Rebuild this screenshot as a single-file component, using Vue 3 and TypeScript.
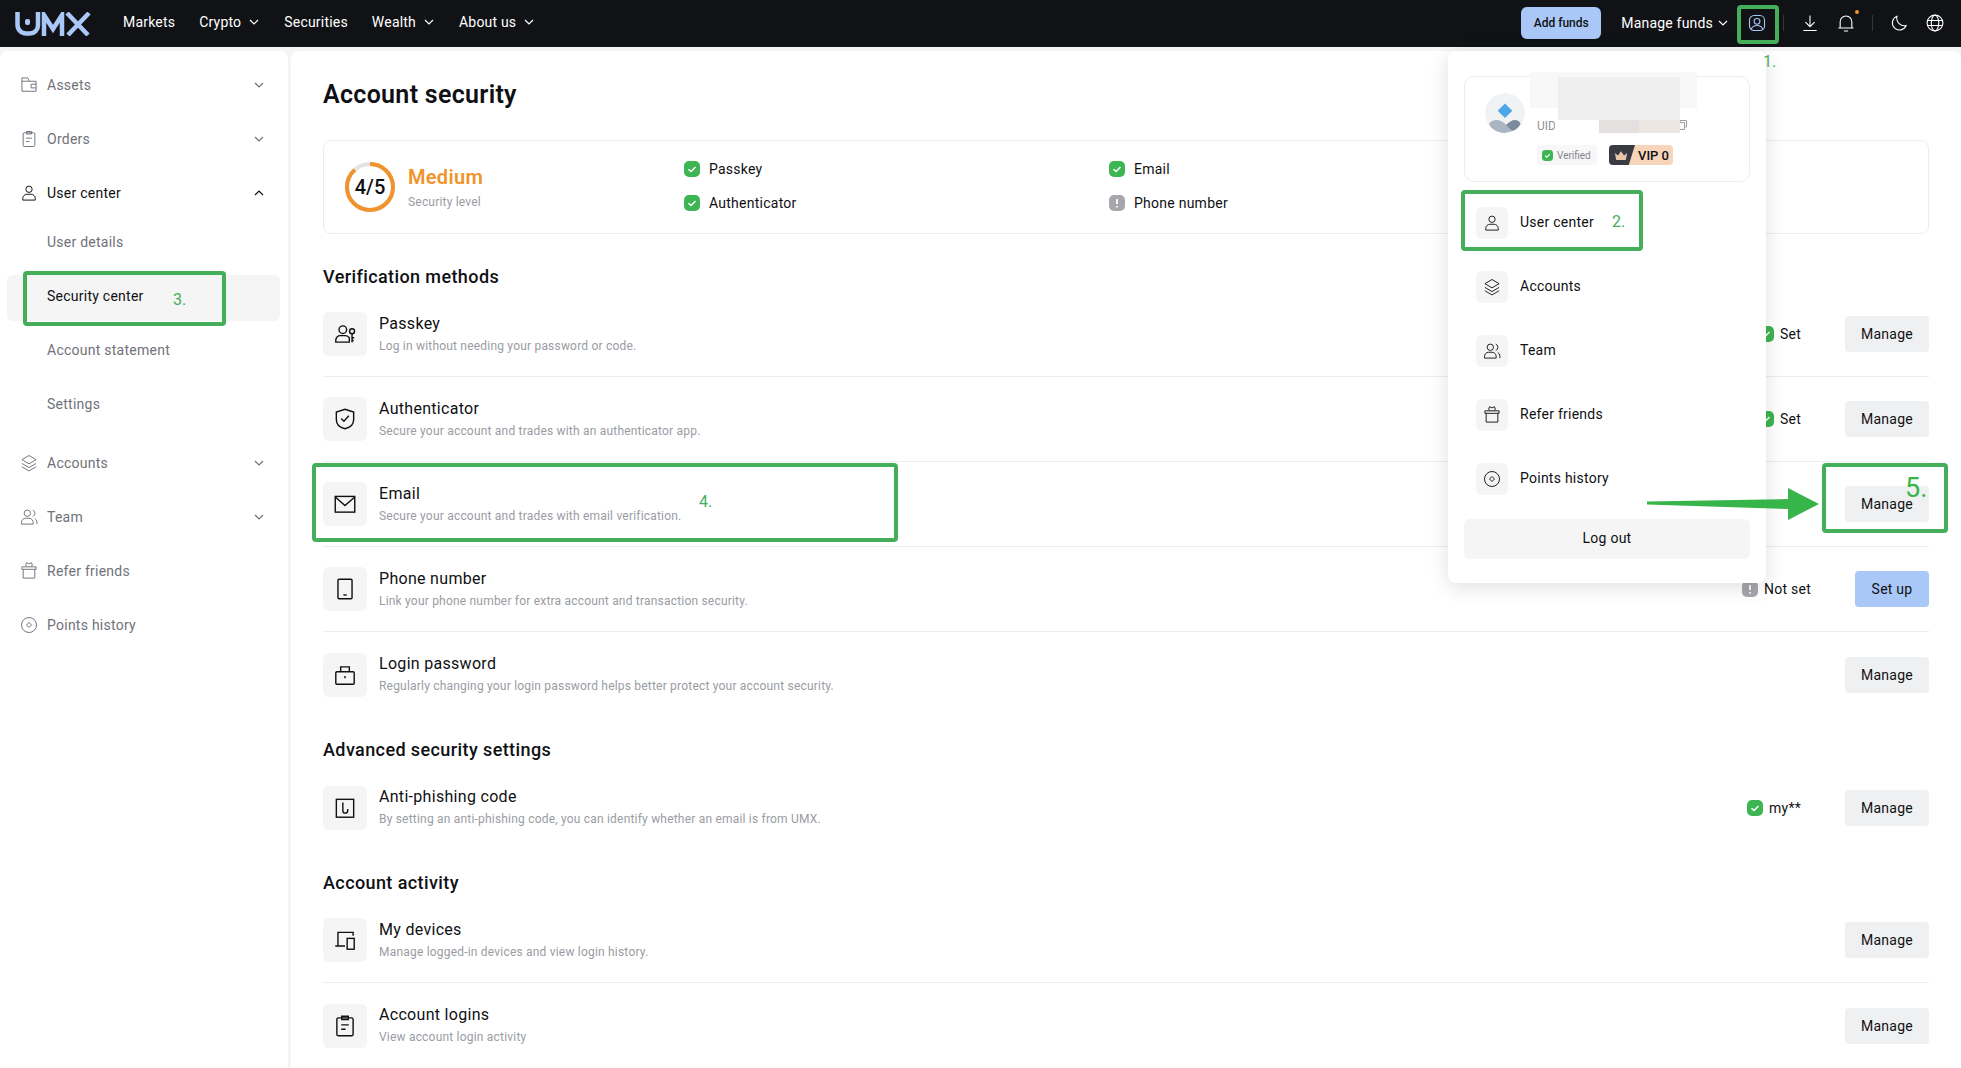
<script setup lang="ts">
interface NavLink {
  label: string;
  arrow?: boolean;
}
interface SideItem {
  label: string;
  icon?: string;
  arrow?: "down" | "up";
  active?: boolean;
  strong?: boolean;
}
interface Row {
  title: string;
  desc: string;
  icon: string;
  status?: string;
  state?: "ok" | "warn";
  action?: string;
}

const icons: Record<string, string> = {
  wallet:
    '<path d="M3.500 5.500v14h17v-12h-17M3.500 5.500v-2h7l2 4"/><path d="M20.500 11h-6v4.500h6"/>',
  orders:
    '<rect x="5" y="4.500" width="14" height="16.500" rx="1.500"/><path d="M9 3h6v3H9zM8.500 11h7M8.500 15h4"/>',
  user: '<circle cx="12" cy="7.500" r="3.800"/><path d="M4.500 20.500v-2a5 5 0 0 1 5-5h5a5 5 0 0 1 5 5v2z"/>',
  layers:
    '<path d="M12 3l8.500 5-8.500 5-8.500-5zM3.500 12.500l8.500 5 8.500-5M3.500 16.500l8.500 5 8.500-5"/>',
  team: '<circle cx="10" cy="7.500" r="3.800"/><path d="M3 20.500v-2a5 5 0 0 1 5-5h4a5 5 0 0 1 5 5v2zM16.500 3.800a4 4 0 0 1 0 7.500M19 13.800a5 5 0 0 1 2.500 4.500v2.200"/>',
  gift: '<path d="M5 10v10.500h14V10M3.500 7h17v3h-17zM12 3.500l-3-1.500-1 3 1.500 2M12 3.500l3-1.500 1 3-1.500 2"/>',
  points:
    '<circle cx="12" cy="12" r="9"/><path d="M12 9l3 3-3 3-3-3z"/>',
  passkey:
    '<circle cx="10" cy="8" r="3.500"/><path d="M3.500 19.500v-2a4 4 0 0 1 4-4h5a4 4 0 0 1 3.500 2v4z"/><circle cx="18.500" cy="9.500" r="2.300"/><path d="M18.500 12v7.500M18.500 15.500h2M18.500 18h1.500"/>',
  shield:
    '<path d="M12 3l8 2.500v7c0 4.500-3.500 7.500-8 8.500-4.500-1-8-4-8-8.500v-7z"/><path d="M8.500 11.500l2.500 2.500 4.500-5"/>',
  mail: '<rect x="3" y="5" width="18" height="14.500"/><path d="M3 5.500l9 8 9-8"/>',
  phone:
    '<rect x="5.500" y="3" width="13" height="18" rx="1"/><path d="M10.500 17.500h3"/>',
  lock: '<rect x="3.500" y="9" width="17" height="11.500" rx="1"/><path d="M8 9V4.500h8V9M12 13v2"/>',
  hook: '<rect x="4" y="4" width="16" height="16.500"/><path d="M10 7v7.500a2.200 2.200 0 0 0 4.500 0v-1.500"/>',
  devices:
    '<path d="M5.500 17V5h14v3M3 17.500h9"/><rect x="14" y="10.500" width="6.500" height="10"/>',
  clipboard:
    '<rect x="4.500" y="4.500" width="15" height="16.500" rx="1.500"/><path d="M9 3h6v3H9zM8.500 11h7M8.500 15h4"/>',
};

const navLinks: NavLink[] = [
  { label: "Markets" },
  { label: "Crypto", arrow: true },
  { label: "Securities" },
  { label: "Wealth", arrow: true },
  { label: "About us", arrow: true },
];

const sideItems: SideItem[] = [
  { label: "Assets", icon: "wallet", arrow: "down" },
  { label: "Orders", icon: "orders", arrow: "down" },
  { label: "User center", icon: "user", arrow: "up", strong: true },
  { label: "User details" },
  { label: "Security center", active: true },
  { label: "Account statement" },
  { label: "Settings" },
  { label: "Accounts", icon: "layers", arrow: "down" },
  { label: "Team", icon: "team", arrow: "down" },
  { label: "Refer friends", icon: "gift" },
  { label: "Points history", icon: "points" },
];

const methods: Row[] = [
  { title: "Passkey", desc: "Log in without needing your password or code.", icon: "passkey", status: "Set", state: "ok" },
  { title: "Authenticator", desc: "Secure your account and trades with an authenticator app.", icon: "shield", status: "Set", state: "ok" },
  { title: "Email", desc: "Secure your account and trades with email verification.", icon: "mail" },
  { title: "Phone number", desc: "Link your phone number for extra account and transaction security.", icon: "phone", status: "Not set", state: "warn", action: "Set up" },
  { title: "Login password", desc: "Regularly changing your login password helps better protect your account security.", icon: "lock" },
];
const advanced: Row[] = [
  { title: "Anti-phishing code", desc: "By setting an anti-phishing code, you can identify whether an email is from UMX.", icon: "hook", status: "my**", state: "ok" },
];
const activity: Row[] = [
  { title: "My devices", desc: "Manage logged-in devices and view login history.", icon: "devices" },
  { title: "Account logins", desc: "View account login activity", icon: "clipboard" },
];
const sections = [
  { title: "Verification methods", rows: methods },
  { title: "Advanced security settings", rows: advanced },
  { title: "Account activity", rows: activity },
];

const summary = [
  { label: "Passkey", state: "ok" },
  { label: "Email", state: "ok" },
  { label: "Authenticator", state: "ok" },
  { label: "Phone number", state: "warn" },
];

const menu = [
  { label: "User center", icon: "user" },
  { label: "Accounts", icon: "layers" },
  { label: "Team", icon: "team" },
  { label: "Refer friends", icon: "gift" },
  { label: "Points history", icon: "points" },
];

// 4 of 5 on the ring, with a small gap at the top left
const ringLength = 2 * Math.PI * 23;
const ringDash = `${ringLength * 0.88} ${ringLength}`;
</script>

<template>
  <div class="page">
    <header class="topbar">
      <svg class="logo" viewBox="0 0 76 24" fill="none" stroke="#a9c7f7" stroke-width="4.500">
        <path d="M2.500 0v13a8.500 8.500 0 0 0 8.500 8.500h4a8 8 0 0 0 8-8V0" />
        <rect x="10" y="7" width="5" height="6" rx="2" fill="#a9c7f7" stroke="none" />
        <path d="M29 24V3l9 14 9-14v21" />
        <path d="M52 1l21 22M74 1L53 23" />
      </svg>
      <nav class="nav">
        <a v-for="link in navLinks" :key="link.label" class="nav-link">
          {{ link.label }}
          <svg v-if="link.arrow" class="chev" viewBox="0 0 12 12"><path d="M2 4l4 4 4-4" /></svg>
        </a>
      </nav>
      <div class="top-right">
        <button class="add-funds">Add funds</button>
        <a class="nav-link manage-funds">
          Manage funds
          <svg class="chev" viewBox="0 0 12 12"><path d="M2 4l4 4 4-4" /></svg>
        </a>
        <svg class="top-icon user-icon" viewBox="0 0 24 24">
          <rect x="3" y="3" width="18" height="18" rx="5.500" />
          <circle cx="12" cy="10" r="3.500" />
          <path d="M5 20c1-3.500 3.500-5 7-5s6 1.500 7 5" />
        </svg>
        <span class="top-sep"></span>
        <svg class="top-icon" viewBox="0 0 24 24">
          <path d="M12 3v13M6.500 11l5.500 5.500 5.500-5.500M4 21h16" />
        </svg>
        <span class="bell-wrap">
          <svg class="top-icon" viewBox="0 0 24 24">
            <path d="M5 18v-7.500a7 7 0 0 1 14 0V18M3 18h18M9.500 21.500h5" />
          </svg>
          <i class="bell-dot"></i>
        </span>
        <span class="top-sep"></span>
        <svg class="top-icon" viewBox="0 0 24 24">
          <path d="M9.500 4a8.500 8.500 0 1 0 11 11c-6 1.500-12.500-4-11-11z" />
        </svg>
        <svg class="top-icon" viewBox="0 0 24 24">
          <circle cx="12" cy="12" r="9.500" />
          <ellipse cx="12" cy="12" rx="4.500" ry="9.500" />
          <path d="M2.500 9h19M2.500 15h19" />
        </svg>
      </div>
    </header>

    <div class="body">
      <aside class="sidebar">
        <a
          v-for="item in sideItems"
          :key="item.label"
          class="side-item"
          :class="{ active: item.active, strong: item.strong, top: item.icon }"
        >
          <svg v-if="item.icon" class="side-icon" viewBox="0 0 24 24" v-html="icons[item.icon]"></svg>
          <span class="side-label">{{ item.label }}</span>
          <svg v-if="item.arrow" class="side-chev" :class="item.arrow" viewBox="0 0 12 12">
            <path d="M2 4l4 4 4-4" />
          </svg>
        </a>
      </aside>

      <main class="main">
        <h1 class="title">Account security</h1>

        <section class="level">
          <div class="score">
            <div class="ring">
              <svg viewBox="0 0 52 52">
                <circle cx="26" cy="26" r="23" class="ring-bg" />
                <circle
                  cx="26"
                  cy="26"
                  r="23"
                  class="ring-fg"
                  :stroke-dasharray="ringDash"
                  transform="rotate(-90 26 26)"
                />
              </svg>
              <span>4/5</span>
            </div>
            <div>
              <div class="medium">Medium</div>
              <div class="level-note">Security level</div>
            </div>
          </div>
          <div class="summary">
            <div v-for="s in summary" :key="s.label" class="summary-item">
              <svg class="mark" viewBox="0 0 16 16">
                <template v-if="s.state === 'ok'">
                  <rect width="16" height="16" rx="5" fill="#3cb552" />
                  <path d="M4.500 8.200l2.500 2.300 4.500-4.500" fill="none" stroke="#fff" stroke-width="1.500" />
                </template>
                <template v-else>
                  <rect width="16" height="16" rx="5" fill="#a5a7ad" />
                  <path d="M8 4v5M8 11v1.500" fill="none" stroke="#fff" stroke-width="1.800" />
                </template>
              </svg>
              {{ s.label }}
            </div>
          </div>
        </section>

        <section v-for="section in sections" :key="section.title" class="group">
          <h2 class="group-title">{{ section.title }}</h2>
          <div v-for="row in section.rows" :key="row.title" class="row">
            <div class="row-icon">
              <svg viewBox="0 0 24 24" v-html="icons[row.icon]"></svg>
            </div>
            <div class="row-text">
              <div class="row-title">{{ row.title }}</div>
              <div class="row-desc">{{ row.desc }}</div>
            </div>
            <div v-if="row.status" class="row-status">
              <svg class="mark" viewBox="0 0 16 16">
                <template v-if="row.state === 'ok'">
                  <rect width="16" height="16" rx="5" fill="#3cb552" />
                  <path d="M4.500 8.200l2.500 2.300 4.500-4.500" fill="none" stroke="#fff" stroke-width="1.500" />
                </template>
                <template v-else>
                  <rect width="16" height="16" rx="5" fill="#a5a7ad" />
                  <path d="M8 4v5M8 11v1.500" fill="none" stroke="#fff" stroke-width="1.800" />
                </template>
              </svg>
              {{ row.status }}
            </div>
            <button class="row-btn" :class="{ primary: row.action }">{{ row.action || "Manage" }}</button>
          </div>
        </section>
      </main>
    </div>

    <!-- account dropdown -->
    <div class="dropdown">
      <div class="profile">
        <svg class="avatar" viewBox="0 0 40 40">
          <clipPath id="avatar-clip"><circle cx="20" cy="20" r="20" /></clipPath>
          <g clip-path="url(#avatar-clip)">
            <circle cx="20" cy="20" r="20" fill="#f0f2f4" />
            <path d="M20 10.500l7.300 7.300-7.300 7.300-7.300-7.300z" fill="#4aa8e8" />
            <path d="M4 31c2-4 8-5 12-3 4 2 7 5 11 10-5 2-11 3-15 1-4-2-7-5-8-8z" fill="#a9b5c3" />
            <path d="M21 32c3-3 6-5 9-5s5 2 5.500 4c-1.500 3-4.500 6-8.500 7-2-2-4-4-6-6z" fill="#7d8c9c" />
          </g>
        </svg>
        <div class="uid">UID</div>
        <svg class="copy" viewBox="0 0 12 12">
          <path d="M4 3V1.500h6.500V8H9M1.500 3.500H8.500V10.500H1.500z" />
        </svg>
        <div class="badges">
          <span class="verified">
            <svg class="mark" viewBox="0 0 16 16">
              <rect width="16" height="16" rx="5" fill="#3cb552" />
              <path d="M4.500 8.200l2.500 2.300 4.500-4.500" fill="none" stroke="#fff" stroke-width="1.500" />
            </svg>
            Verified
          </span>
          <span class="vip">
            <span class="vip-crown">
              <svg viewBox="0 0 16 12"><path d="M1 3l3.500 3L8 1l3.500 5L15 3l-1.500 8h-11z" fill="#e8c4a8" /></svg>
            </span>
            VIP 0
          </span>
        </div>
        <i class="blur blur-a"></i>
        <i class="blur blur-b"></i>
        <i class="blur blur-c"></i>
        <i class="blur blur-d"></i>
      </div>
      <a v-for="m in menu" :key="m.label" class="menu-item">
        <span class="menu-icon">
          <svg viewBox="0 0 24 24" v-html="icons[m.icon]"></svg>
        </span>
        <span class="menu-label">{{ m.label }}</span>
      </a>
      <button class="logout">Log out</button>
    </div>

    <!-- green tutorial marks drawn over the screenshot -->
    <i class="mark-box box-1"></i>
    <i class="mark-box box-2"></i>
    <i class="mark-box box-3"></i>
    <i class="mark-box box-4"></i>
    <i class="mark-box box-5"></i>
    <span class="step step-1">1.</span>
    <span class="step step-2">2.</span>
    <span class="step step-3">3.</span>
    <span class="step step-4">4.</span>
    <span class="step step-5">5.</span>
    <svg class="arrow" viewBox="0 0 172 32">
      <path d="M0 13.500L141 11V0l31 16-31 16V21L0 16.500z" fill="#38b54a" />
    </svg>
  </div>
</template>

<style>
html,
body {
  margin: 0;
  background: #f5f5f5;
}
</style>

<style scoped>
.page {
  position: relative;
  width: 1961px;
  height: 1068px;
  overflow: hidden;
  font-family: Roboto, "Noto Sans", sans-serif;
  color: #0f1013;
  background: #f5f5f5;
}

.topbar {
  height: 47px;
  background: #111215;
  display: flex;
  align-items: center;
  padding: 0 16px 0 15px;
}

.logo {
  width: 76px;
  height: 24px;
  flex: none;
}

.nav {
  display: flex;
  margin-left: 32px;
  gap: 24px;
  padding-bottom: 3px;
}

.nav-link {
  display: flex;
  align-items: center;
  gap: 7px;
  color: #fff;
  font-size: 14px;
  letter-spacing: 0.2px;
  white-space: nowrap;
}

.chev {
  width: 12px;
  height: 12px;
  fill: none;
  stroke: #fff;
  stroke-width: 1.200;
}

.top-right {
  margin-left: auto;
  display: flex;
  align-items: center;
  padding-bottom: 1px;
}

.add-funds {
  width: 80px;
  height: 32px;
  border: 0;
  border-radius: 6px;
  background: #a9c7f7;
  color: #0f1013;
  font: 500 12px Roboto, sans-serif;
  margin-right: 20px;
}

.manage-funds {
  gap: 4px;
  margin-right: 18px;
}

.top-icon {
  width: 20px;
  height: 20px;
  fill: none;
  stroke: #fff;
  stroke-width: 1.300;
  display: block;
}

.user-icon {
  stroke: #a9c7f7;
}

.top-sep {
  width: 1px;
  height: 16px;
  background: #33353a;
  margin: 0 16px;
}

.bell-wrap {
  position: relative;
  margin-left: 16px;
}

.bell-dot {
  position: absolute;
  top: -3px;
  right: -3px;
  width: 4px;
  height: 4px;
  border-radius: 50%;
  background: #f0932b;
}

.top-right > .top-icon:last-child {
  margin-left: 16px;
}

.body {
  display: flex;
  height: 1017px;
  margin-top: 4px;
  gap: 3px;
}

.sidebar {
  width: 288px;
  flex: none;
  background: #fff;
  border-radius: 8px 8px 0 0;
  padding: 7px 8px 0 7px;
  box-sizing: border-box;
}

.side-item {
  display: flex;
  align-items: center;
  height: 54px;
  padding: 0 15px 0 40px;
  color: #70727a;
  font-size: 14px;
  letter-spacing: 0.25px;
  border-radius: 6px;
}

.side-item.top {
  padding-left: 12px;
}

/* the sub list sits closer to its parent and leaves the gap below it */
.side-item:nth-child(4) {
  margin-top: -5px;
}

.side-item:nth-child(7) {
  margin-bottom: 5px;
}

.side-item.active {
  height: 46px;
  box-sizing: border-box;
  margin: 6px 0 2px;
  padding-bottom: 4px;
  background: #f5f5f5;
  color: #0f1013;
}

.side-item.strong {
  color: #0f1013;
}

.side-icon {
  width: 20px;
  height: 20px;
  margin-right: 8px;
  fill: none;
  stroke: #70727a;
  stroke-width: 1.150;
  flex: none;
}

.strong .side-icon {
  stroke: #0f1013;
}

.side-chev {
  margin-left: auto;
  width: 12px;
  height: 12px;
  fill: none;
  stroke: #70727a;
  stroke-width: 1.200;
}

.side-chev.up {
  transform: rotate(180deg);
  stroke: #0f1013;
}

.main {
  flex: 1;
  background: #fff;
  border-radius: 8px 8px 0 0;
  padding: 0 32px;
  overflow: hidden;
}

.title {
  margin: 30px 0 0;
  font-size: 25px;
  line-height: 28px;
  font-weight: 600;
  letter-spacing: 0.3px;
}

.level {
  margin-top: 31px;
  height: 94px;
  box-sizing: border-box;
  border: 1px solid #ebecee;
  border-radius: 8px;
  display: flex;
  align-items: center;
  padding-left: 20px;
}

.score {
  display: flex;
  align-items: center;
  gap: 12px;
  width: 340px;
}

.ring {
  position: relative;
  width: 52px;
  height: 52px;
}

.ring svg {
  width: 52px;
  height: 52px;
  fill: none;
  stroke-width: 4;
}

.ring-bg {
  stroke: #e3e3e3;
}

.ring-fg {
  stroke: #f0932b;
}

.ring span {
  position: absolute;
  inset: 0;
  display: flex;
  align-items: center;
  justify-content: center;
  font-size: 20px;
  font-weight: 500;
}

.medium {
  color: #f0932b;
  font-size: 20px;
  line-height: 26px;
  font-weight: 600;
  letter-spacing: 0.3px;
}

.level-note {
  color: #9a9ca3;
  font-size: 12px;
  line-height: 16px;
  margin-top: 4px;
  letter-spacing: 0.2px;
}

.summary {
  display: grid;
  grid-template-columns: 425px 400px;
  row-gap: 14px;
  padding-bottom: 2px;
}

.summary-item {
  display: flex;
  align-items: center;
  gap: 9px;
  font-size: 14px;
  letter-spacing: 0.25px;
  line-height: 20px;
}

.mark {
  width: 16px;
  height: 16px;
  flex: none;
}

.group-title {
  margin: 0 0 3px;
  padding-top: 1px;
  font-size: 18px;
  line-height: 24px;
  font-weight: 500;
  letter-spacing: 0.4px;
}

.group {
  margin-top: 30px;
}

.group + .group {
  margin-top: 20px;
}

.row {
  display: flex;
  align-items: center;
  height: 85px;
  box-sizing: border-box;
  padding: 20px 0;
  border-bottom: 1px solid #ebecee;
}

.row:last-child {
  border-bottom: 0;
}

.row-icon {
  width: 44px;
  height: 44px;
  border-radius: 6px;
  background: #f5f5f5;
  display: flex;
  align-items: center;
  justify-content: center;
  flex: none;
}

.row-icon svg {
  width: 26px;
  height: 26px;
  fill: none;
  stroke: #0f1013;
  stroke-width: 1.300;
}

.row-text {
  margin-left: 12px;
  flex: 1;
  padding-bottom: 2px;
}

.row-title {
  font-size: 16px;
  line-height: 22px;
  letter-spacing: 0.3px;
}

.row-desc {
  font-size: 12px;
  line-height: 16px;
  color: #9a9ca3;
  margin-top: 3px;
  letter-spacing: 0.2px;
}

.row-status {
  display: flex;
  align-items: center;
  gap: 6px;
  margin-right: 44px;
  font-size: 14px;
  letter-spacing: 0.25px;
}

.row-btn {
  height: 36px;
  width: 84px;
  border: 0;
  border-radius: 4px;
  background: #eff0f2;
  color: #0f1013;
  font: 400 14px Roboto, sans-serif;
  letter-spacing: 0.25px;
}

.row-btn.primary {
  width: 74px;
  background: #a9c7f7;
}

.dropdown {
  position: absolute;
  left: 1448px;
  top: 51px;
  width: 318px;
  height: 532px;
  box-sizing: border-box;
  background: #fff;
  border-radius: 8px;
  box-shadow: 0 4px 20px rgba(0, 0, 0, 0.13);
  padding: 25px 16px 0;
}

.profile {
  position: relative;
  height: 106px;
  border: 1px solid #ebecee;
  border-radius: 10px;
  box-sizing: border-box;
  margin-bottom: 25px;
}

.avatar {
  position: absolute;
  left: 20px;
  top: 16px;
  width: 40px;
  height: 40px;
}

.uid {
  position: absolute;
  left: 72px;
  top: 41px;
  font-size: 12px;
  line-height: 16px;
  color: #8f9198;
}

.copy {
  position: absolute;
  left: 211px;
  top: 42px;
  width: 12px;
  height: 12px;
  fill: none;
  stroke: #9a9ca3;
}

.badges {
  position: absolute;
  left: 72px;
  top: 68px;
  display: flex;
  gap: 12px;
}

.verified {
  display: flex;
  align-items: center;
  gap: 4px;
  height: 20px;
  width: 60px;
  box-sizing: border-box;
  padding: 0 4px 0 5px;
  background: #f7f7f7;
  border-radius: 3px;
  font-size: 10px;
  color: #85878d;
}

.verified .mark {
  width: 11px;
  height: 11px;
}

.vip {
  display: flex;
  align-items: center;
  gap: 3px;
  height: 20px;
  width: 64px;
  background: #f6d5bb;
  border-radius: 4px;
  font-size: 13px;
  font-weight: 500;
  overflow: hidden;
}

.vip-crown {
  width: 26px;
  height: 20px;
  background: #3a3b42;
  clip-path: polygon(0 0, 100% 0, 76% 100%, 0 100%);
  display: flex;
  align-items: center;
  padding-left: 5px;
  box-sizing: border-box;
}

.vip-crown svg {
  width: 14px;
  height: 11px;
}

.blur {
  position: absolute;
}

.blur-a {
  left: 65px;
  top: -5px;
  width: 167px;
  height: 36px;
  background: #f8f8f8;
}

.blur-b {
  left: 93px;
  top: 0;
  width: 122px;
  height: 44px;
  background: #efefef;
}

.blur-c {
  left: 90px;
  top: 43px;
  width: 44px;
  height: 14px;
  background: #fff;
}

.blur-d {
  left: 134px;
  top: 43px;
  width: 81px;
  height: 13px;
  background: linear-gradient(90deg, #e4e0df 50%, #ede7e3 50%);
}

.menu-item {
  display: flex;
  align-items: center;
  height: 32px;
  margin: 0 0 32px 12px;
  font-size: 14px;
  letter-spacing: 0.25px;
  gap: 12px;
}

.menu-label {
  padding-bottom: 2px;
}

.menu-icon {
  width: 32px;
  height: 32px;
  border-radius: 6px;
  background: #f5f5f5;
  display: flex;
  align-items: center;
  justify-content: center;
}

.menu-icon svg {
  width: 20px;
  height: 20px;
  fill: none;
  stroke: #0f1013;
  stroke-width: 1.100;
}

.logout {
  display: block;
  width: 286px;
  height: 40px;
  margin-top: -8px;
  padding-bottom: 3px;
  border: 0;
  border-radius: 6px;
  background: #f5f5f5;
  color: #0f1013;
  font: 400 14px Roboto, sans-serif;
  letter-spacing: 0.25px;
}

.mark-box {
  position: absolute;
  border: 4px solid #45ae5b;
  border-radius: 4px;
  box-sizing: border-box;
}

.box-1 {
  left: 1737px;
  top: 5px;
  width: 42px;
  height: 39px;
}

.box-2 {
  left: 1461px;
  top: 190px;
  width: 182px;
  height: 61px;
}

.box-3 {
  left: 23px;
  top: 271px;
  width: 203px;
  height: 55px;
}

.box-4 {
  left: 312px;
  top: 463px;
  width: 586px;
  height: 79px;
}

.box-5 {
  left: 1822px;
  top: 463px;
  width: 126px;
  height: 70px;
}

.step {
  position: absolute;
  color: #45ae5b;
  font-size: 16px;
  line-height: 20px;
}

.step-1 {
  left: 1763px;
  top: 52px;
}

.step-2 {
  left: 1612px;
  top: 212px;
}

.step-3 {
  left: 173px;
  top: 290px;
}

.step-4 {
  left: 699px;
  top: 492px;
}

.step-5 {
  left: 1905px;
  top: 472px;
  font-size: 27px;
  line-height: 32px;
  color: #38b54a;
}

.arrow {
  position: absolute;
  left: 1647px;
  top: 488px;
  width: 172px;
  height: 32px;
}
</style>
